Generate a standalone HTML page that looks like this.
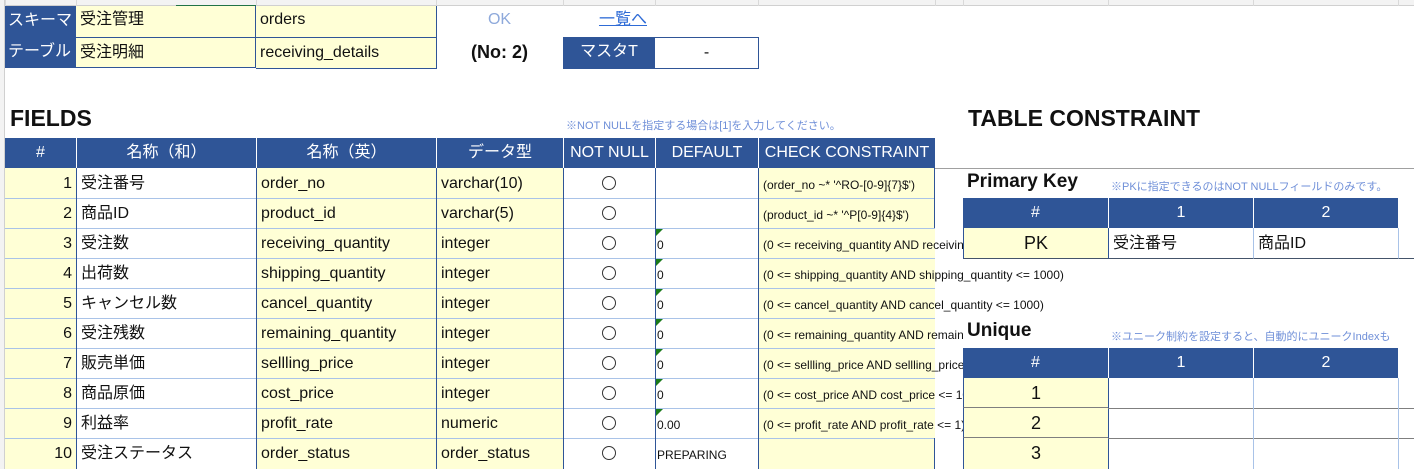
<!DOCTYPE html>
<html><head><meta charset="utf-8"><style>
*{margin:0;padding:0;box-sizing:border-box}
body{width:1414px;height:469px;overflow:hidden;background:#fff;position:relative;font-family:"Liberation Sans","Noto Sans CJK JP",sans-serif;color:#111}
div{position:absolute;white-space:nowrap}
.gv{top:0;width:1px;height:6px;background:#d9d9d9}
.c{font-size:16px;line-height:32px;padding:0 4px;overflow:hidden}
.hd{background:#2f5597;color:#fff;text-align:center;font-size:16px;line-height:30px}
.y{background:#ffffd6}
.w{background:#fff}
.r{text-align:right}
.ctr{text-align:center}
.sm{font-size:12px}
.tri{width:0;height:0;border-top:7px solid #1a7a1a;border-right:7px solid transparent}
.note{color:#6f8fd8;font-size:11px}
.h1{font-weight:bold;font-size:23px}
.h2{font-weight:bold;font-size:19px}
.o{width:14px;height:14px;border:1px solid #333;border-radius:50%;left:602px}
</style></head><body>
<div style="left:0;top:0;width:1414px;height:6px;background:#f3f3f3;border-bottom:1px solid #d0d0d0"></div>
<div class="gv" style="left:5px"></div><div class="gv" style="left:76px"></div><div class="gv" style="left:256px"></div><div class="gv" style="left:436px"></div><div class="gv" style="left:563px"></div><div class="gv" style="left:655px"></div><div class="gv" style="left:758px"></div><div class="gv" style="left:935px"></div><div class="gv" style="left:963px"></div><div class="gv" style="left:1108px"></div><div class="gv" style="left:1253px"></div><div class="gv" style="left:1398px"></div>
<div style="left:0;top:0;width:5px;height:469px;background:#f3f3f3;border-right:1px solid #d0d0d0"></div>
<div style="left:176px;top:5px;width:80px;height:2px;background:#217346"></div>

<!-- top block -->
<div class="hd" style="left:5px;top:6px;width:71px;height:31px;text-align:left;padding-left:3px">スキーマ</div>
<div class="hd" style="left:5px;top:37px;width:71px;height:31px;text-align:left;padding-left:3px">テーブル</div>
<div class="c y" style="left:76px;top:6px;width:180px;height:31px;border-right:1px solid #2f5597;line-height:28px">受注管理</div>
<div class="c y" style="left:76px;top:37px;width:180px;height:31px;border-right:1px solid #2f5597;border-top:1px solid #2f5597;border-bottom:1px solid #2f5597;line-height:30px">受注明細</div>
<div class="c y" style="left:256px;top:6px;width:181px;height:31px;border-right:1px solid #2f5597;line-height:28px">orders</div>
<div class="c y" style="left:256px;top:37px;width:181px;height:32px;border:1px solid #2f5597;border-left:none;line-height:30px">receiving_details</div>
<div class="c ctr" style="left:436px;top:4px;width:127px;color:#8ea9db">OK</div>
<div class="c ctr" style="left:563px;top:4px;width:120px;color:#2e6bd6;text-decoration:underline">一覧へ</div>
<div class="c ctr" style="left:436px;top:36px;width:127px;font-weight:bold;font-size:18px">(No: 2)</div>
<div class="hd" style="left:563px;top:37px;width:92px;height:32px">マスタT</div>
<div class="c ctr" style="left:655px;top:37px;width:104px;height:32px;border:1px solid #2f5597;border-left:none;line-height:30px">-</div>

<!-- FIELDS -->
<div class="h1" style="left:10px;top:105px">FIELDS</div>
<div class="note" style="left:566px;top:117px">※NOT NULLを指定する場合は[1]を入力してください。</div>
<div class="h1" style="left:968px;top:105px">TABLE CONSTRAINT</div>
<div style="left:935px;top:168px;width:479px;height:1px;background:#a0a0a0"></div>

<div class="hd" style="left:5px;top:138px;width:71px">#</div>
<div class="hd" style="left:76px;top:138px;width:180px;border-left:1px solid #fff">名称（和）</div>
<div class="hd" style="left:256px;top:138px;width:180px;border-left:1px solid #fff">名称（英）</div>
<div class="hd" style="left:436px;top:138px;width:127px;border-left:1px solid #fff">データ型</div>
<div class="hd" style="left:563px;top:138px;width:92px;border-left:1px solid #fff">NOT NULL</div>
<div class="hd" style="left:655px;top:138px;width:103px;border-left:1px solid #fff">DEFAULT</div>
<div class="hd" style="left:758px;top:138px;width:177px;border-left:1px solid #fff">CHECK CONSTRAINT</div>

<div class="y" style="left:5px;top:168px;width:71px;height:301px"></div>
<div class="w" style="left:76px;top:168px;width:180px;height:301px"></div>
<div class="y" style="left:256px;top:168px;width:180px;height:301px"></div>
<div class="y" style="left:436px;top:168px;width:127px;height:301px"></div>
<div class="w" style="left:563px;top:168px;width:195px;height:301px"></div>
<div class="y" style="left:758px;top:168px;width:177px;height:301px"></div>
<div style="left:5px;top:198px;width:930px;height:1px;background:#a9c3e8"></div>
<div style="left:5px;top:228px;width:930px;height:1px;background:#a9c3e8"></div>
<div style="left:5px;top:258px;width:930px;height:1px;background:#a9c3e8"></div>
<div style="left:5px;top:288px;width:930px;height:1px;background:#a9c3e8"></div>
<div style="left:5px;top:318px;width:930px;height:1px;background:#a9c3e8"></div>
<div style="left:5px;top:348px;width:930px;height:1px;background:#a9c3e8"></div>
<div style="left:5px;top:378px;width:930px;height:1px;background:#a9c3e8"></div>
<div style="left:5px;top:408px;width:930px;height:1px;background:#a9c3e8"></div>
<div style="left:5px;top:438px;width:930px;height:1px;background:#a9c3e8"></div>
<div style="left:76px;top:168px;width:1px;height:301px;background:#2f5597"></div>
<div style="left:256px;top:168px;width:1px;height:301px;background:#2f5597"></div>
<div style="left:436px;top:168px;width:1px;height:301px;background:#2f5597"></div>
<div style="left:563px;top:168px;width:1px;height:301px;background:#2f5597"></div>
<div style="left:655px;top:168px;width:1px;height:301px;background:#2f5597"></div>
<div style="left:758px;top:168px;width:1px;height:301px;background:#2f5597"></div>
<div style="left:934px;top:168px;width:1px;height:60px;background:#2f5597"></div>
<div style="left:934px;top:438px;width:1px;height:31px;background:#2f5597"></div>

<!-- rows -->
<div class="c r" style="left:5px;top:168px;width:71px">1</div><div class="c" style="left:77px;top:168px">受注番号</div><div class="c" style="left:257px;top:168px">order_no</div><div class="c" style="left:437px;top:168px">varchar(10)</div><div class="o" style="top:176px"></div><div class="c sm" style="left:759px;top:169px">(order_no ~* '^RO-[0-9]{7}$')</div>
<div class="c r" style="left:5px;top:198px;width:71px">2</div><div class="c" style="left:77px;top:198px">商品ID</div><div class="c" style="left:257px;top:198px">product_id</div><div class="c" style="left:437px;top:198px">varchar(5)</div><div class="o" style="top:206px"></div><div class="c sm" style="left:759px;top:199px">(product_id ~* '^P[0-9]{4}$')</div>
<div class="c r" style="left:5px;top:228px;width:71px">3</div><div class="c" style="left:77px;top:228px">受注数</div><div class="c" style="left:257px;top:228px">receiving_quantity</div><div class="c" style="left:437px;top:228px">integer</div><div class="o" style="top:236px"></div><div class="c sm" style="left:655px;top:229px;padding-left:2px">0</div><div class="c sm" style="left:759px;top:229px">(0 &lt;= receiving_quantity AND receiving_quantity &lt;= 1000)</div>
<div class="c r" style="left:5px;top:258px;width:71px">4</div><div class="c" style="left:77px;top:258px">出荷数</div><div class="c" style="left:257px;top:258px">shipping_quantity</div><div class="c" style="left:437px;top:258px">integer</div><div class="o" style="top:266px"></div><div class="c sm" style="left:655px;top:259px;padding-left:2px">0</div><div class="c sm" style="left:759px;top:259px">(0 &lt;= shipping_quantity AND shipping_quantity &lt;= 1000)</div>
<div class="c r" style="left:5px;top:288px;width:71px">5</div><div class="c" style="left:77px;top:288px">キャンセル数</div><div class="c" style="left:257px;top:288px">cancel_quantity</div><div class="c" style="left:437px;top:288px">integer</div><div class="o" style="top:296px"></div><div class="c sm" style="left:655px;top:289px;padding-left:2px">0</div><div class="c sm" style="left:759px;top:289px">(0 &lt;= cancel_quantity AND cancel_quantity &lt;= 1000)</div>
<div class="c r" style="left:5px;top:318px;width:71px">6</div><div class="c" style="left:77px;top:318px">受注残数</div><div class="c" style="left:257px;top:318px">remaining_quantity</div><div class="c" style="left:437px;top:318px">integer</div><div class="o" style="top:326px"></div><div class="c sm" style="left:655px;top:319px;padding-left:2px">0</div><div class="c sm" style="left:759px;top:319px">(0 &lt;= remaining_quantity AND remaining_quantity &lt;= 1000)</div>
<div class="c r" style="left:5px;top:348px;width:71px">7</div><div class="c" style="left:77px;top:348px">販売単価</div><div class="c" style="left:257px;top:348px">sellling_price</div><div class="c" style="left:437px;top:348px">integer</div><div class="o" style="top:356px"></div><div class="c sm" style="left:655px;top:349px;padding-left:2px">0</div><div class="c sm" style="left:759px;top:349px">(0 &lt;= sellling_price AND sellling_price &lt;= 1000)</div>
<div class="c r" style="left:5px;top:378px;width:71px">8</div><div class="c" style="left:77px;top:378px">商品原価</div><div class="c" style="left:257px;top:378px">cost_price</div><div class="c" style="left:437px;top:378px">integer</div><div class="o" style="top:386px"></div><div class="c sm" style="left:655px;top:379px;padding-left:2px">0</div><div class="c sm" style="left:759px;top:379px">(0 &lt;= cost_price AND cost_price &lt;= 1000)</div>
<div class="c r" style="left:5px;top:408px;width:71px">9</div><div class="c" style="left:77px;top:408px">利益率</div><div class="c" style="left:257px;top:408px">profit_rate</div><div class="c" style="left:437px;top:408px">numeric</div><div class="o" style="top:416px"></div><div class="c sm" style="left:655px;top:409px;padding-left:2px">0.00</div><div class="c sm" style="left:759px;top:409px">(0 &lt;= profit_rate AND profit_rate &lt;= 1)</div>
<div class="c r" style="left:5px;top:438px;width:71px">10</div><div class="c" style="left:77px;top:438px">受注ステータス</div><div class="c" style="left:257px;top:438px">order_status</div><div class="c" style="left:437px;top:438px">order_status</div><div class="o" style="top:446px"></div><div class="c sm" style="left:655px;top:439px;padding-left:2px">PREPARING</div>
<div class="tri" style="left:656px;top:229px"></div><div class="tri" style="left:656px;top:259px"></div><div class="tri" style="left:656px;top:289px"></div><div class="tri" style="left:656px;top:319px"></div><div class="tri" style="left:656px;top:349px"></div><div class="tri" style="left:656px;top:379px"></div><div class="tri" style="left:656px;top:409px"></div>

<!-- Primary Key -->
<div class="w" style="left:963px;top:170px;width:451px;height:28px"></div>
<div class="h2" style="left:967px;top:171px">Primary Key</div>
<div class="note" style="left:1111px;top:178px">※PKに指定できるのはNOT NULLフィールドのみです。</div>
<div class="hd" style="left:963px;top:198px;width:145px">#</div>
<div class="hd" style="left:1108px;top:198px;width:145px;border-left:1px solid #fff">1</div>
<div class="hd" style="left:1253px;top:198px;width:145px;border-left:1px solid #fff">2</div>
<div class="hd" style="left:1398px;top:198px;width:16px;border-left:1px solid #fff"></div>
<div class="y c ctr" style="left:963px;top:228px;width:145px;height:31px;border-left:1px solid #2f5597;border-bottom:1px solid #44546a;font-size:18px;line-height:30px">PK</div>
<div class="w c" style="left:1108px;top:228px;width:145px;height:31px;border-left:1px solid #2f5597;border-bottom:1px solid #44546a">受注番号</div>
<div class="w c" style="left:1253px;top:228px;width:145px;height:31px;border-left:1px solid #a9c3e8;border-bottom:1px solid #44546a">商品ID</div>
<div class="w" style="left:1398px;top:228px;width:16px;height:31px;border-left:1px solid #a9c3e8;border-bottom:1px solid #44546a"></div>

<!-- Unique -->
<div class="w" style="left:963px;top:319px;width:451px;height:29px"></div>
<div class="h2" style="left:967px;top:320px">Unique</div>
<div class="note" style="left:1111px;top:328px">※ユニーク制約を設定すると、自動的にユニークIndexも</div>
<div class="hd" style="left:963px;top:348px;width:145px">#</div>
<div class="hd" style="left:1108px;top:348px;width:145px;border-left:1px solid #fff">1</div>
<div class="hd" style="left:1253px;top:348px;width:145px;border-left:1px solid #fff">2</div>
<div class="hd" style="left:1398px;top:348px;width:16px;border-left:1px solid #fff"></div>
<div class="y c ctr" style="left:963px;top:378px;width:145px;height:30px;border-left:1px solid #2f5597;border-bottom:1px solid #7f7f7f;font-size:18px;line-height:30px">1</div>
<div class="y c ctr" style="left:963px;top:408px;width:145px;height:30px;border-left:1px solid #2f5597;border-bottom:1px solid #7f7f7f;font-size:18px;line-height:30px">2</div>
<div class="y c ctr" style="left:963px;top:438px;width:145px;height:31px;border-left:1px solid #2f5597;font-size:18px;line-height:30px">3</div>
<div class="w" style="left:1108px;top:378px;width:306px;height:91px;border-left:1px solid #2f5597"></div>
<div style="left:1108px;top:408px;width:306px;height:1px;background:#7f7f7f"></div>
<div style="left:1108px;top:438px;width:306px;height:1px;background:#7f7f7f"></div>
<div style="left:1253px;top:378px;width:1px;height:91px;background:#a9c3e8"></div>
<div style="left:1398px;top:378px;width:1px;height:91px;background:#a9c3e8"></div>
</body></html>
